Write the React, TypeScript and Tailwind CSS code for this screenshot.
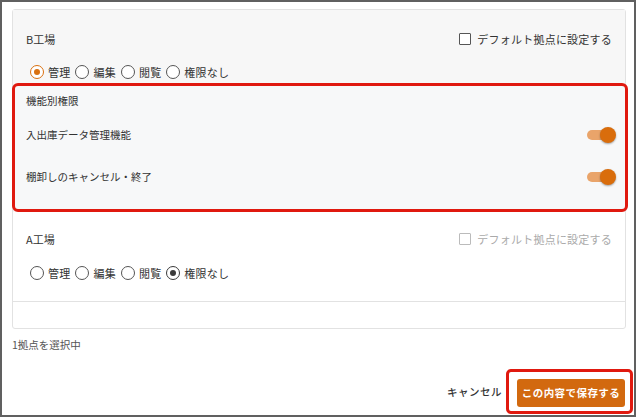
import { useState } from 'react';

type Level = '管理' | '編集' | '閲覧' | '権限なし';

const LEVELS: Level[] = ['管理', '編集', '閲覧', '権限なし'];

function Radio({ checked, tone }: { checked: boolean; tone: 'orange' | 'gray' }) {
  const ring = checked
    ? tone === 'orange'
      ? 'border-[1.5px] border-[#d9700f]'
      : 'border-[1.5px] border-[#3a3a3a]'
    : 'border border-[#555]';
  const dot = tone === 'orange' ? 'bg-[#d9700f]' : 'bg-[#3a3a3a]';
  return (
    <span className={`flex h-[14px] w-[14px] items-center justify-center rounded-full bg-white ${ring}`}>
      {checked && <span className={`h-[6px] w-[6px] rounded-full ${dot}`} />}
    </span>
  );
}

function LevelRadios({ value, tone }: { value: Level; tone: 'orange' | 'gray' }) {
  return (
    <div className="flex h-[20px] items-center gap-[5px] pl-[17px] text-[11px] tracking-[0.02em] text-[#333]">
      {LEVELS.map((lv) => (
        <label key={lv} className="flex items-center gap-[4px]">
          <Radio checked={lv === value} tone={tone} />
          <span>{lv}</span>
        </label>
      ))}
    </div>
  );
}

function DefaultCheck({ disabled }: { disabled?: boolean }) {
  return (
    <label className={`flex items-center gap-[6px] text-[11px] tracking-[0.02em] ${disabled ? 'text-[#aaa]' : 'text-[#333]'}`}>
      <span className={`h-[12px] w-[12px] rounded-[1px] border bg-white ${disabled ? 'border-[#bbb]' : 'border-[#555]'}`} />
      デフォルト拠点に設定する
    </label>
  );
}

function Toggle({ on }: { on: boolean }) {
  return (
    <span className="relative flex h-[16px] w-[29px] items-center">
      <span className={`h-[10px] w-[24px] rounded-full ${on ? 'bg-[#e9a46a]' : 'bg-[#ccc]'}`} />
      <span
        className={`absolute top-0 h-[16px] w-[16px] rounded-full shadow-[0_1px_2px_rgba(0,0,0,0.35)] ${
          on ? 'right-0 bg-[#d96d0c]' : 'left-0 bg-white'
        }`}
      />
    </span>
  );
}

export default function App() {
  const [features] = useState([
    { id: 'stock', label: '入出庫データ管理機能', on: true },
    { id: 'inventory', label: '棚卸しのキャンセル・終了', on: true },
  ]);

  return (
    <div
      className="flex h-[417px] w-[636px] flex-col border-2 border-[#606060] bg-white px-[10px] pt-[7px] text-[#333]"
      style={{ fontFamily: '"Noto Sans CJK JP", "Noto Sans", sans-serif' }}
    >
      <div className="h-[320px] w-[614px] shrink-0 rounded-[3px] border border-[#e2e2e2]">
        {/* B工場 */}
        <div className="bg-[#f7f7f7] pt-[19px]">
          <div className="flex h-[20px] items-center justify-between pl-[13px] pr-[13px]">
            <span className="text-[11px]">B工場</span>
            <DefaultCheck />
          </div>
          <div className="mt-[13px]">
            <LevelRadios value="管理" tone="orange" />
          </div>

          <div className="-ml-px -mr-[3px] mt-px h-[129px] rounded-[6px] border-[3px] border-[#e0190f] bg-[#f7f8f9] pt-[5px]">
            <div className="flex h-[20px] items-center pl-[11px] text-[10.5px]">機能別権限</div>
            {features.map((f, i) => (
              <div
                key={f.id}
                className={`flex h-[20px] items-center justify-between pl-[11px] pr-[9px] text-[10.5px] ${
                  i === 0 ? 'mt-[14px]' : 'mt-[22px]'
                }`}
              >
                <span>{f.label}</span>
                <Toggle on={f.on} />
              </div>
            ))}
          </div>
        </div>

        {/* A工場 */}
        <div className="bg-white pt-[17px]">
          <div className="flex h-[20px] items-center justify-between pl-[13px] pr-[13px]">
            <span className="text-[11px]">A工場</span>
            <DefaultCheck disabled />
          </div>
          <div className="mt-[14px]">
            <LevelRadios value="権限なし" tone="gray" />
          </div>
          <div className="mt-[18px] border-t border-[#e2e2e2]" />
        </div>
      </div>

      <div className="mt-[6px] flex h-[20px] shrink-0 items-center text-[10.5px] text-[#555]">1拠点を選択中</div>

      <div className="mt-[14px] flex shrink-0 items-center justify-end gap-[4px]">
        <button type="button" className="text-[10.5px] font-medium tracking-[0.05em] text-[#333]">
          キャンセル
        </button>
        <div className="-mr-[9px] rounded-[5px] border-[3px] border-[#e0190f] pb-[4px] pl-[8px] pr-[5px] pt-[7px]">
          <button
            type="button"
            className="flex h-[28px] w-[108px] items-center justify-center rounded-[3px] bg-[#d2690f] text-[10.5px] font-bold tracking-[0.04em] text-white"
          >
            この内容で保存する
          </button>
        </div>
      </div>
    </div>
  );
}
